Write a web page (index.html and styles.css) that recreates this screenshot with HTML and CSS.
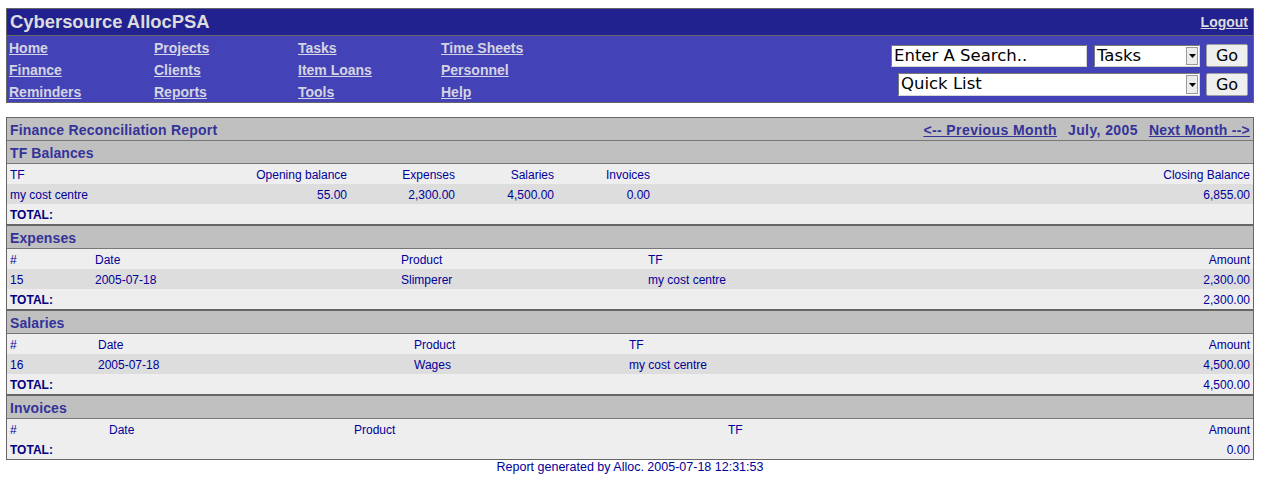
FILE: index.html
```html
<!DOCTYPE html>
<html>
<head>
<meta charset="utf-8">
<title>Finance Reconciliation Report</title>
<link rel="stylesheet" href="styles.css">
</head>
<body>
<div class="header">
  <div class="titlebar">
    <span class="site-title">Cybersource AllocPSA</span>
    <a class="logout" href="#">Logout</a>
  </div>
  <div class="navbar">
    <div class="menu">
      <a href="#">Home</a><a href="#">Projects</a><a href="#">Tasks</a><a href="#">Time Sheets</a>
      <a href="#">Finance</a><a href="#">Clients</a><a href="#">Item Loans</a><a href="#">Personnel</a>
      <a href="#">Reminders</a><a href="#">Reports</a><a href="#">Tools</a><a href="#">Help</a>
    </div>
    <div class="forms">
      <div class="form-row">
        <div class="field search">Enter A Search..</div>
        <div class="field select sel-tasks"><span class="sel-text">Tasks</span><span class="arrow"><svg width="7" height="4" viewBox="0 0 7 4"><path d="M0 0h7L3.5 4z" fill="#000"/></svg></span></div>
        <div class="btn">Go</div>
      </div>
      <div class="form-row">
        <div class="field select sel-quick"><span class="sel-text">Quick List</span><span class="arrow"><svg width="7" height="4" viewBox="0 0 7 4"><path d="M0 0h7L3.5 4z" fill="#000"/></svg></span></div>
        <div class="btn">Go</div>
      </div>
    </div>
  </div>
</div>

<div class="report">
  <div class="report-title">
    <span>Finance Reconciliation Report</span>
    <span class="month-nav"><a class="prev" href="#">&lt;-- Previous Month</a><b class="cur">July, 2005</b><a class="next" href="#">Next Month --&gt;</a></span>
  </div>

  <div class="block">
    <div class="block-head">TF Balances</div>
    <table class="grid t-bal">
      <colgroup><col><col><col><col><col><col></colgroup>
      <tr class="row-a"><td>TF</td><td class="r">Opening balance</td><td class="r">Expenses</td><td class="r">Salaries</td><td class="r">Invoices</td><td class="r">Closing Balance</td></tr>
      <tr class="row-b"><td>my cost centre</td><td class="r">55.00</td><td class="r">2,300.00</td><td class="r">4,500.00</td><td class="r">0.00</td><td class="r">6,855.00</td></tr>
      <tr class="row-a"><td class="tot">TOTAL:</td><td></td><td></td><td></td><td></td><td></td></tr>
    </table>
  </div>

  <div class="block">
    <div class="block-head">Expenses</div>
    <table class="grid t-exp">
      <colgroup><col><col><col><col><col></colgroup>
      <tr class="row-a"><td>#</td><td>Date</td><td>Product</td><td>TF</td><td class="r">Amount</td></tr>
      <tr class="row-b"><td>15</td><td>2005-07-18</td><td>Slimperer</td><td>my cost centre</td><td class="r">2,300.00</td></tr>
      <tr class="row-a"><td class="tot">TOTAL:</td><td></td><td></td><td></td><td class="r">2,300.00</td></tr>
    </table>
  </div>

  <div class="block">
    <div class="block-head">Salaries</div>
    <table class="grid t-sal">
      <colgroup><col><col><col><col><col></colgroup>
      <tr class="row-a"><td>#</td><td>Date</td><td>Product</td><td>TF</td><td class="r">Amount</td></tr>
      <tr class="row-b"><td>16</td><td>2005-07-18</td><td>Wages</td><td>my cost centre</td><td class="r">4,500.00</td></tr>
      <tr class="row-a"><td class="tot">TOTAL:</td><td></td><td></td><td></td><td class="r">4,500.00</td></tr>
    </table>
  </div>

  <div class="block last">
    <div class="block-head">Invoices</div>
    <table class="grid t-inv">
      <colgroup><col><col><col><col><col></colgroup>
      <tr class="row-a"><td>#</td><td>Date</td><td>Product</td><td>TF</td><td class="r">Amount</td></tr>
      <tr class="row-a"><td class="tot">TOTAL:</td><td></td><td></td><td></td><td class="r">0.00</td></tr>
    </table>
  </div>
</div>

<div class="footer">Report generated by Alloc. 2005-07-18 12:31:53</div>
</body>
</html>
```

FILE: styles.css
```css
html, body {
  margin: 0;
  padding: 0;
  background: #ffffff;
}
body {
  padding: 8px 7px 0 6px;
  font-family: "Liberation Sans", Arial, sans-serif;
  font-size: 12px;
  color: #000099;
}

/* ---------- header ---------- */
.header {
  border: 1px solid #666666;
}
.titlebar {
  height: 26px;
  background: #21218f;
  border-bottom: 1px solid #666666;
  display: flex;
  align-items: center;
  justify-content: space-between;
  padding: 0 5px 0 3px;
}
.site-title {
  font-weight: bold;
  font-size: 18.4px;
  color: #dcdcdc;
}
.logout {
  font-weight: bold;
  font-size: 14px;
  color: #dcdcdc;
}
.navbar {
  background: #4343b7;
  height: 66px;
  display: flex;
  justify-content: space-between;
  padding-left: 2px;
}
.menu {
  display: grid;
  grid-template-columns: 145px 144px 143px 120px;
  grid-auto-rows: 22px;
  align-items: center;
  padding-top: 1px;
}
.menu a {
  font-weight: bold;
  font-size: 14px;
  color: #d4d4e2;
  text-decoration: underline;
  justify-self: start;
}
.forms {
  display: flex;
  flex-direction: column;
  align-items: flex-end;
  gap: 6px;
  padding: 8px 5px 0 0;
}
.form-row {
  display: flex;
  align-items: center;
}
.field {
  height: 22px;
  box-sizing: border-box;
  background: #ffffff;
  border: 1px solid #7a7a7a;
  border-right-color: #d6d6d6;
  border-bottom-color: #d6d6d6;
  font-family: "DejaVu Sans", sans-serif;
  font-size: 16.5px;
  color: #000000;
  line-height: 20px;
  padding-left: 2px;
  white-space: nowrap;
}
.search {
  width: 196px;
  margin-right: 7px;
}
.select {
  display: flex;
  justify-content: space-between;
  align-items: stretch;
  padding-right: 1px;
}
.sel-tasks {
  width: 106px;
}
.sel-quick {
  width: 302px;
  height: 23px;
}
.arrow {
  width: 12px;
  margin: 1px 0;
  box-sizing: border-box;
  background: #ececec;
  border: 1px solid #9a9a9a;
  display: flex;
  align-items: center;
  justify-content: center;
}
.btn {
  width: 42px;
  height: 23px;
  box-sizing: border-box;
  margin-left: 6px;
  background: #efefef;
  border: 1px solid #a0a0a0;
  border-radius: 2px;
  font-family: "DejaVu Sans", sans-serif;
  font-size: 16px;
  color: #000000;
  display: flex;
  align-items: center;
  justify-content: center;
}

/* ---------- report ---------- */
.report {
  margin-top: 14px;
  border: 1px solid #666666;
}
.report-title {
  height: 23px;
  box-sizing: border-box;
  padding: 1px 3px 0;
  background: #c0c0c0;
  border-bottom: 1px solid #777777;
  display: flex;
  align-items: center;
  justify-content: space-between;
  font-weight: bold;
  font-size: 14px;
  color: #333399;
  letter-spacing: 0.2px;
}
.month-nav {
  display: flex;
  gap: 11px;
}
.month-nav a {
  color: #333399;
  text-decoration: underline;
}
.month-nav .prev {
  letter-spacing: 0.4px;
}
.month-nav .cur {
  letter-spacing: 0.4px;
}
.month-nav .next {
  letter-spacing: 0.25px;
}
.block {
  border-bottom: 2px solid #666666;
}
.block.last {
  border-bottom: 0;
}
.block-head {
  height: 23px;
  box-sizing: border-box;
  padding: 2px 3px 0;
  line-height: 20px;
  background: #c0c0c0;
  border-bottom: 1px solid #777777;
  font-weight: bold;
  font-size: 14px;
  color: #333399;
  letter-spacing: 0.1px;
}
.grid {
  width: 100%;
  table-layout: fixed;
  border-collapse: collapse;
}
.grid td {
  height: 20px;
  padding: 1px 3px 0;
  box-sizing: border-box;
  white-space: nowrap;
  overflow: hidden;
  color: #000099;
  font-size: 12px;
}
.grid td.r {
  text-align: right;
}
.grid td.tot {
  font-weight: bold;
  color: #000080;
}
.row-a {
  background: #eeeeee;
}
.row-b {
  background: #dddddd;
}

/* column widths per section */
.t-bal col:nth-child(1) { width: 150px; }
.t-bal col:nth-child(2) { width: 193px; }
.t-bal col:nth-child(3) { width: 108px; }
.t-bal col:nth-child(4) { width: 99px; }
.t-bal col:nth-child(5) { width: 96px; }

.t-exp col:nth-child(1) { width: 85px; }
.t-exp col:nth-child(2) { width: 306px; }
.t-exp col:nth-child(3) { width: 247px; }
.t-exp col:nth-child(4) { width: 455px; }

.t-sal col:nth-child(1) { width: 88px; }
.t-sal col:nth-child(2) { width: 316px; }
.t-sal col:nth-child(3) { width: 215px; }
.t-sal col:nth-child(4) { width: 474px; }

.t-inv col:nth-child(1) { width: 99px; }
.t-inv col:nth-child(2) { width: 245px; }
.t-inv col:nth-child(3) { width: 374px; }
.t-inv col:nth-child(4) { width: 375px; }

/* ---------- footer ---------- */
.footer {
  text-align: center;
  font-size: 12.5px;
  color: #000099;
  padding-top: 0;
}
```
